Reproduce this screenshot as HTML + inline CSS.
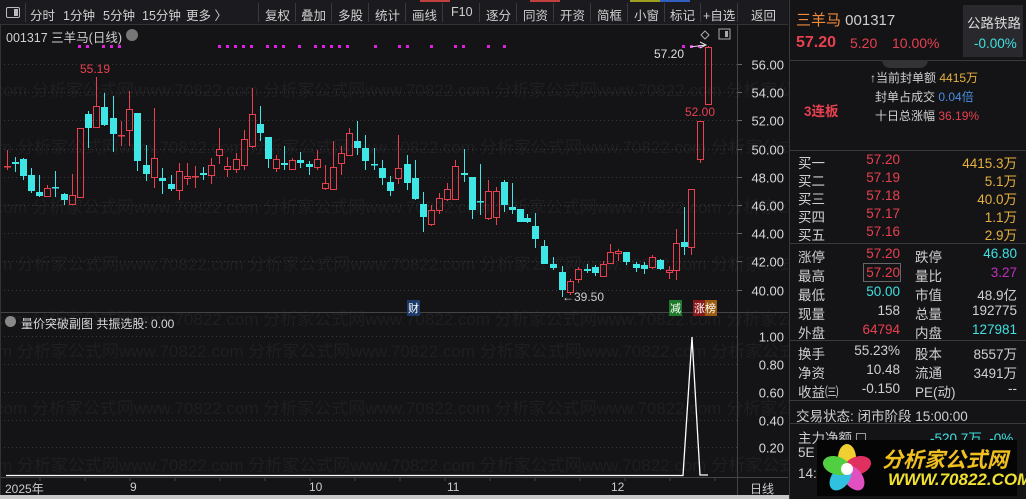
<!DOCTYPE html>
<html><head><meta charset="utf-8">
<style>
*{margin:0;padding:0;box-sizing:border-box}
body{width:1026px;height:499px;background:#141417;overflow:hidden;position:relative;font-family:"Liberation Sans","Noto Sans CJK SC",sans-serif;color:#cfcfcf}
.abs{position:absolute;white-space:nowrap}
#tb{position:absolute;left:0;top:0;width:788px;height:25px;background:#1b1b1f;border-bottom:1px solid #333}
.t{position:absolute;top:5px;font-size:12.5px;color:#d0d0d0}
.sep{position:absolute;top:3px;width:1px;height:19px;background:#3a3a3e}
#rp{position:absolute;left:789px;top:0;width:237px;height:499px;background:#141417;border-left:1px solid #3a3a3e}
.r{font-size:13.5px;position:absolute;white-space:nowrap}
.hl{position:absolute;left:0;width:237px;height:1px;background:#3a3a3e}
.red{color:#e8404f}.cy{color:#3fe0e0}.gd{color:#e6b040}.wh{color:#d0d0d0}
.rt{text-align:right}
</style></head><body>
<div id="tb">
<div class="abs" style="left:6px;top:7px;width:14px;height:11px;border:1.5px solid #bbb;border-radius:2px"></div>
<div class="abs" style="left:14px;top:9px;width:4px;height:7px;background:#bbb"></div>
<div class="sep" style="left:25px"></div>
<div class="t" style="left:30px">分时</div><div class="t" style="left:63px">1分钟</div><div class="t" style="left:103px">5分钟</div><div class="t" style="left:142px">15分钟</div><div class="t" style="left:186px">更多 〉</div>
<div class="sep" style="left:258px"></div><div class="t" style="left:265px">复权</div>
<div class="sep" style="left:295px"></div><div class="t" style="left:301px">叠加</div>
<div class="sep" style="left:331px"></div><div class="t" style="left:338px">多股</div>
<div class="sep" style="left:368px"></div><div class="t" style="left:375px">统计</div>
<div class="sep" style="left:405px"></div><div class="t" style="left:412px">画线</div>
<div class="sep" style="left:442px"></div><div class="t" style="left:451px">F10</div>
<div class="sep" style="left:479px"></div><div class="t" style="left:486px">逐分</div>
<div class="sep" style="left:516px"></div><div class="t" style="left:523px">同资</div>
<div class="sep" style="left:553px"></div><div class="t" style="left:560px">开资</div>
<div class="sep" style="left:590px"></div><div class="t" style="left:597px">简框</div>
<div class="sep" style="left:627px"></div><div class="t" style="left:634px">小窗</div>
<div class="sep" style="left:664px"></div><div class="t" style="left:670px">标记</div>
<div class="sep" style="left:700px"></div><div class="t" style="left:703px">+自选</div>
<div class="sep" style="left:737px"></div><div class="t" style="left:751px">返回</div>
<div class="abs" style="left:420px;top:0;width:30px;height:2px;background:#c04040"></div>
<div class="abs" style="left:530px;top:0;width:30px;height:2px;background:#c04040"></div>
<div class="abs" style="left:630px;top:0;width:30px;height:2px;background:#a0a020"></div>
<div class="abs" style="left:660px;top:0;width:30px;height:2px;background:#3060c0"></div>
</div>
<svg id="ch" width="789" height="499" style="position:absolute;left:0;top:0" xmlns="http://www.w3.org/2000/svg"></svg>
<div class="abs" style="left:6px;top:27px;font-size:12.5px;color:#d0d0d0">001317 三羊马(日线)</div>
<div class="abs" style="left:126px;top:29px;width:12px;height:12px;border-radius:6px;background:#777"></div>
<div class="abs" style="left:5px;top:316px;width:11px;height:11px;border-radius:6px;background:#888"></div>
<div class="abs" style="left:21px;top:315px;font-size:12px;color:#d8d8d8">量价突破副图 共振选股: 0.00</div>
<div class="abs" style="left:80px;top:62px;font-size:12px;color:#e8404f">55.19</div>
<div class="abs" style="left:654px;top:47px;font-size:12px;color:#ddd">57.20</div>
<div class="abs" style="left:685px;top:105px;font-size:12px;color:#e8404f">52.00</div>
<div class="abs" style="left:562px;top:290px;font-size:12px;color:#ccc">←39.50</div>
<div class="abs" style="left:407px;top:300px;font-size:11px;color:#fff;background:#1d3a6a;padding:0 1px">财</div>
<div class="abs" style="left:669px;top:300px;font-size:11px;color:#fff;background:#1e7a2a;padding:0 1px">减</div>
<div class="abs" style="left:693px;top:300px;font-size:11px;color:#fff;background:linear-gradient(90deg,#8a1a1a 50%,#9a5a10 50%);padding:0 1px">涨榜</div>
<div class="abs" style="left:5px;top:480px;font-size:12px;color:#ccc">2025年</div>
<div class="abs" style="left:130px;top:480px;font-size:12px;color:#ccc">9</div>
<div class="abs" style="left:309px;top:480px;font-size:12px;color:#ccc">10</div>
<div class="abs" style="left:447px;top:480px;font-size:12px;color:#ccc">11</div>
<div class="abs" style="left:611px;top:480px;font-size:12px;color:#ccc">12</div>
<div class="abs" style="left:750px;top:480px;font-size:12px;color:#ccc">日线</div>
<div id="rp">
<div class="r" style="left:6px;top:9px;font-size:15px;color:#f08a3a">三羊马 <span style="color:#cfcfcf">001317</span></div>
<div class="abs" style="left:173px;top:5px;width:60px;height:52px;background:#29292d"></div>
<div class="r" style="left:177px;top:12px;color:#d8d8d8">公路铁路</div>
<div class="r cy" style="left:184px;top:36px">-0.00%</div>
<div class="r red" style="left:6px;top:34px;font-size:16px;font-weight:bold">57.20</div>
<div class="r red" style="left:60px;top:35px;font-size:14px">5.20</div>
<div class="r red" style="left:102px;top:35px;font-size:14px">10.00%</div>
<div class="hl" style="top:60px"></div>
<div class="abs" style="left:92px;top:60px;width:46px;height:8px;background:#333;border-radius:0 0 8px 8px"></div>
<div class="r" style="left:80px;top:69px;font-size:12px">↑当前封单额 <span class="gd">4415万</span></div>
<div class="r" style="left:85px;top:88px;font-size:12px">封单占成交 <span style="color:#4a8fe0">0.04倍</span></div>
<div class="r" style="left:85px;top:107px;font-size:12px">十日总涨幅 <span class="red">36.19%</span></div>
<div class="r red" style="left:14px;top:100px;font-weight:bold">3连板</div>
<div class="hl" style="top:150px"></div>
<div id="rows"></div>
<div class="hl" style="top:243px"></div>
<div class="hl" style="top:340px"></div>
<div class="hl" style="top:400px"></div>
<div class="r" style="left:6px;top:405px">交易状态: 闭市阶段 15:00:00</div>
<div class="hl" style="top:423px"></div>
<div class="r" style="left:8px;top:427px">主力净额 <span style="display:inline-block;width:10px;height:10px;border:1px solid #999"></span></div>
<div class="r cy" style="left:140px;top:427px">-520.7万 &nbsp;-0%</div>
<div class="r" style="left:8px;top:445px">5E</div>
<div class="r" style="left:8px;top:466px">14:</div>
<div class="abs" style="left:27px;top:440px;width:200px;height:56px;background:#050505"></div>
<svg class="abs" style="left:30px;top:442px" width="54" height="54"><g transform="translate(27,27)"><ellipse rx="9" ry="14" cy="-11" fill="#f0d030"/><ellipse rx="9" ry="14" cy="-11" fill="#e03060" transform="rotate(72)"/><ellipse rx="9" ry="14" cy="-11" fill="#e050c0" transform="rotate(144)"/><ellipse rx="9" ry="14" cy="-11" fill="#30c0e0" transform="rotate(216)"/><ellipse rx="9" ry="14" cy="-11" fill="#50d040" transform="rotate(288)"/><circle r="6" fill="#fff"/></g></svg>
<div class="r" style="left:92px;top:444px;font-size:21px;font-weight:bold;font-style:italic;color:#f0c020">分析家公式网</div>
<div class="r" style="left:98px;top:470px;font-size:17px;font-weight:bold;font-style:italic;color:#f0e030">WWW.70822.COM</div>
</div>
<div class="abs" style="left:0;top:495px;width:789px;height:4px;background:#c8c8c8"></div>
<script>
var s='';
function y(p){return 64+(56-p)*14.1;}
var wm='com 分析家公式网www.70822.com 分析家公式网www.70822.com 分析家公式网www.70822.com 分析家公式网www.70822';
[96,153,213,270,325,357,414,471].forEach(function(yy,i){s+='<text x="'+(i%2?-20:-5)+'" y="'+yy+'" font-size="17" fill="#1f1f22" font-family="Liberation Sans,Noto Sans CJK SC">'+wm+'</text>';});
[56,54,52,50,48,46,44,42,40].forEach(function(p){var yy=Math.round(y(p))+.5;s+='<line x1="0" x2="737" y1="'+yy+'" y2="'+yy+'" stroke="#3a3a3e" stroke-dasharray="1,3"/>';s+='<line x1="737" x2="742" y1="'+yy+'" y2="'+yy+'" stroke="#666"/>';s+='<text x="784" y="'+(yy+5)+'" font-size="13" fill="#d8d8d8" text-anchor="end" font-family="Liberation Sans">'+p.toFixed(2)+'</text>';});
[[1,336],[.8,364],[.6,392],[.4,420],[.2,447]].forEach(function(a){var yy=a[1]+.5;s+='<line x1="0" x2="737" y1="'+yy+'" y2="'+yy+'" stroke="#3a3a3e" stroke-dasharray="1,3"/>';s+='<text x="784" y="'+(yy+5)+'" font-size="13" fill="#d8d8d8" text-anchor="end" font-family="Liberation Sans">'+a[0].toFixed(2)+'</text>';});
s+='<line x1="737.5" x2="737.5" y1="25" y2="495" stroke="#444"/>';
s+='<line x1="0" x2="788" y1="312.5" y2="312.5" stroke="#444"/>';
s+='<line x1="0" x2="788" y1="477.5" y2="477.5" stroke="#444"/>';
s+='<line x1="0.5" x2="0.5" y1="25" y2="495" stroke="#333"/>';
[78,86,102,110,118,218,226,234,242,250,266,274,282,298,314,322,330,338,346,374,398,406,430,454,462,487,503,682,690,698].forEach(function(x){s+='<rect x="'+x+'" y="45" width="3" height="3" fill="#e020e0"/>';});
var C=[[7,'r',166,167,150,170],[15,'c',162,164,157,172],[23,'c',159,176,158,180],[31,'c',175,191,168,193],[39,'c',192,196,175,197],[47,'r',188,196,185,197],[55,'c',187,188,171,197],[64,'c',194,200,193,205],[72,'r',195,204,174,205],[80,'r',128,197,128,197],[88,'c',114,128,111,148],[96,'r',106,127,77,127],[104,'c',107,125,93,126],[113,'c',118,134,96,152],[121,'r',135,136,121,146],[129,'r',109,130,91,146],[137,'c',113,161,113,171],[146,'c',165,174,145,181],[154,'r',158,177,108,188],[162,'c',178,181,168,194],[171,'c',184,189,175,191],[179,'r',171,190,163,200],[187,'r',176,178,163,185],[195,'r',176,177,166,188],[203,'c',173,175,167,180],[211,'r',165,175,158,184],[219,'r',149,155,128,164],[227,'r',166,169,157,177],[236,'r',159,169,153,173],[244,'r',139,165,130,170],[252,'r',114,146,88,148],[260,'c',124,133,106,141],[268,'c',137,159,137,168],[276,'r',159,168,155,172],[284,'c',163,165,146,170],[292,'r',160,169,158,170],[300,'c',160,163,152,168],[309,'c',164,167,161,175],[317,'r',159,167,150,170],[325,'r',183,188,165,190],[333,'r',167,189,141,190],[341,'r',153,163,146,175],[349,'r',133,155,128,156],[357,'c',141,148,121,155],[365,'c',148,161,135,170],[374,'c',164,165,148,170],[382,'c',168,178,160,185],[390,'c',182,191,176,196],[398,'r',168,178,135,184],[407,'c',164,183,155,190],[415,'c',178,199,160,200],[423,'c',204,217,192,232],[431,'r',210,224,205,226],[439,'r',198,210,193,214],[447,'r',189,199,183,201],[455,'r',166,199,160,200],[464,'c',173,175,149,182],[472,'c',177,210,177,219],[480,'c',201,202,164,215],[488,'r',191,218,180,220],[496,'r',191,217,187,225],[504,'c',182,205,180,212],[512,'c',207,210,183,214],[520,'c',209,222,209,222],[527,'c',218,222,214,223],[535,'c',226,239,213,248],[544,'c',246,264,240,264],[553,'c',264,268,257,270],[562,'c',272,290,266,297],[570,'r',281,292,279,295],[578,'r',269,279,267,283],[587,'c',269,271,264,273],[595,'c',267,273,265,276],[603,'r',264,276,261,277],[610,'r',252,263,244,264],[618,'r',251,253,249,261],[626,'c',252,262,252,265],[636,'c',264,268,262,272],[644,'c',265,269,262,274],[652,'r',257,267,255,269],[660,'c',260,269,259,270],[669,'r',270,272,266,279],[676,'r',243,270,229,280],[684,'c',242,247,207,255],[691,'r',189,247,189,255],[700,'r',121,159,121,163],[708,'r',47,104,46,104]];
C.forEach(function(c){var x=c[0],t=c[2],b=c[3],h=c[4],l=c[5];
if(c[1]=='r'){s+='<line x1="'+(x+.5)+'" x2="'+(x+.5)+'" y1="'+h+'" y2="'+t+'" stroke="#e8404f"/><line x1="'+(x+.5)+'" x2="'+(x+.5)+'" y1="'+b+'" y2="'+l+'" stroke="#e8404f"/>';
if(b-t<2)s+='<rect x="'+(x-3)+'" y="'+t+'" width="7" height="1.5" fill="#e8404f"/>';else s+='<rect x="'+(x-2.5)+'" y="'+(t+.5)+'" width="6" height="'+(b-t)+'" fill="none" stroke="#e8404f"/>';}
else{s+='<line x1="'+(x+.5)+'" x2="'+(x+.5)+'" y1="'+h+'" y2="'+l+'" stroke="#3fe6e6"/><rect x="'+(x-3)+'" y="'+t+'" width="7" height="'+Math.max(b-t,1.5)+'" fill="#3fe6e6"/>';}});
s+='<path d="M690 47 L706 45 M700 42 L706 45 L700 48" stroke="#ddd" fill="none"/>';
s+='<path d="M705 31 l4 4 -4 4 -4 -4z" stroke="#aaa" fill="none"/><rect x="719" y="29" width="11" height="10" fill="none" stroke="#aaa"/><rect x="725" y="31" width="3" height="6" fill="#aaa"/>';
s+='<polyline points="6,475.5 683,475.5 692,337 700,475 708,475" stroke="#fff" stroke-width="1.3" fill="none"/>';
for(var x=40;x<737;x+=45)s+='<line x1="'+x+'" x2="'+x+'" y1="478" y2="481" stroke="#444"/>';
document.getElementById('ch').innerHTML=s;
var R='';
var buys=[['买一','57.20','4415.3万'],['买二','57.19','5.1万'],['买三','57.18','40.0万'],['买四','57.17','1.1万'],['买五','57.16','2.9万']];
buys.forEach(function(b,i){var yy=152+i*18;R+='<div class="r" style="left:8px;top:'+yy+'px">'+b[0]+'</div><div class="r red rt" style="left:40px;width:70px;top:'+yy+'px">'+b[1]+'</div><div class="r gd rt" style="left:140px;width:87px;top:'+yy+'px">'+b[2]+'</div>';});
var g=[['涨停','57.20','red','跌停','46.80','cy',246],['最高','57.20','red','量比','3.27','pu',265],['最低','50.00','cy','市值','48.9亿','wh',284],['现量','158','wh','总量','192775','wh',303],['外盘','64794','red','内盘','127981','cy',322],['换手','55.23%','wh','股本','8557万','wh',343],['净资','10.48','wh','流通','3491万','wh',362],['收益㈢','-0.150','wh','PE(动)','--','wh',381]];
g.forEach(function(a){var yy=a[6];R+='<div class="r" style="left:8px;top:'+yy+'px">'+a[0]+'</div><div class="r '+a[2]+' rt" style="left:40px;width:70px;top:'+yy+'px">'+a[1]+'</div><div class="r" style="left:125px;top:'+yy+'px">'+a[3]+'</div><div class="r '+a[5]+' rt" style="left:150px;width:77px;top:'+yy+'px'+(a[5]=='pu'?';color:#c030c0':'')+'">'+a[4]+'</div>';});
R+='<div class="abs" style="left:73px;top:263px;width:38px;height:19px;border:1px solid #666"></div>';
document.getElementById('rows').innerHTML=R;
</script>
</body></html>
